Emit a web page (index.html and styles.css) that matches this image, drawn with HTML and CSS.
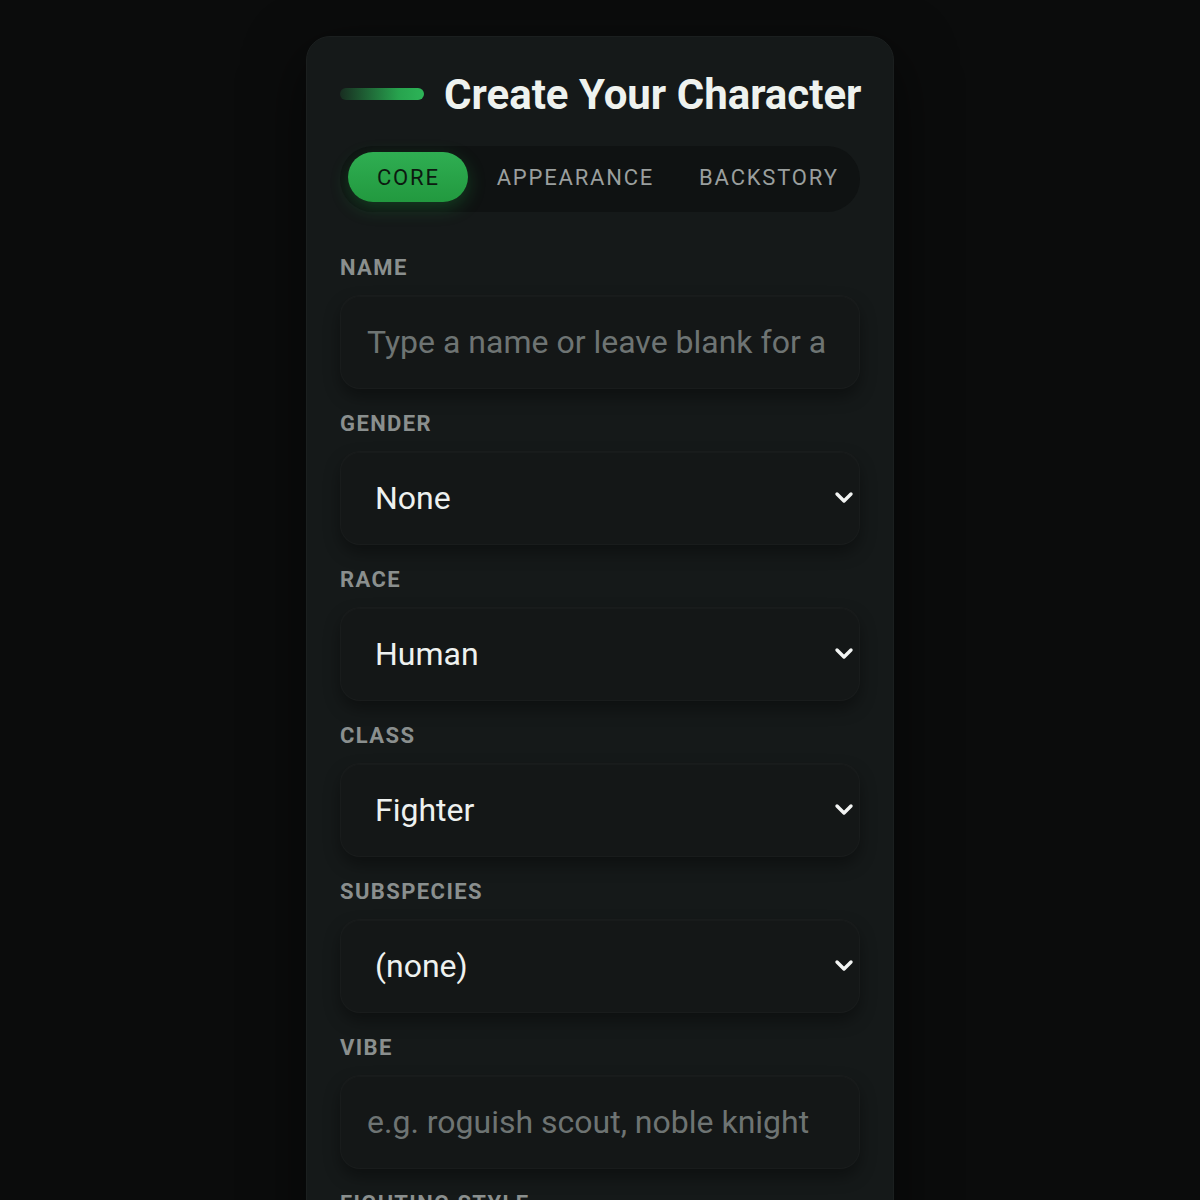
FILE: index.html
```html
<!DOCTYPE html>
<html lang="en">
<head>
<meta charset="utf-8">
<title>Create Your Character</title>
<link rel="stylesheet" href="styles.css">
</head>
<body>
<main class="card">
  <header class="card-head">
    <span class="accent-bar"></span>
    <h1 class="title">Create Your Character</h1>
  </header>

  <nav class="tabs">
    <button class="tab tab-active">CORE</button>
    <button class="tab">APPEARANCE</button>
    <button class="tab">BACKSTORY</button>
  </nav>

  <form class="form">
    <div class="field">
      <label class="label" for="name">NAME</label>
      <input class="control input" id="name" type="text" placeholder="Type a name or leave blank for a random one">
    </div>

    <div class="field">
      <label class="label" for="gender">GENDER</label>
      <div class="select-wrap">
        <select class="control select" id="gender"><option>None</option><option>Male</option><option>Female</option></select>
        <svg class="chev" viewBox="0 0 20 14" width="20" height="14"><path d="M3 3 L10 10 L17 3" fill="none" stroke="#f2f4f3" stroke-width="3.4" stroke-linecap="round" stroke-linejoin="round"/></svg>
      </div>
    </div>

    <div class="field">
      <label class="label" for="race">RACE</label>
      <div class="select-wrap">
        <select class="control select" id="race"><option>Human</option><option>Elf</option><option>Dwarf</option></select>
        <svg class="chev" viewBox="0 0 20 14" width="20" height="14"><path d="M3 3 L10 10 L17 3" fill="none" stroke="#f2f4f3" stroke-width="3.4" stroke-linecap="round" stroke-linejoin="round"/></svg>
      </div>
    </div>

    <div class="field">
      <label class="label" for="class">CLASS</label>
      <div class="select-wrap">
        <select class="control select" id="class"><option>Fighter</option><option>Wizard</option><option>Rogue</option></select>
        <svg class="chev" viewBox="0 0 20 14" width="20" height="14"><path d="M3 3 L10 10 L17 3" fill="none" stroke="#f2f4f3" stroke-width="3.4" stroke-linecap="round" stroke-linejoin="round"/></svg>
      </div>
    </div>

    <div class="field">
      <label class="label" for="sub">SUBSPECIES</label>
      <div class="select-wrap">
        <select class="control select" id="sub"><option>(none)</option></select>
        <svg class="chev" viewBox="0 0 20 14" width="20" height="14"><path d="M3 3 L10 10 L17 3" fill="none" stroke="#f2f4f3" stroke-width="3.4" stroke-linecap="round" stroke-linejoin="round"/></svg>
      </div>
    </div>

    <div class="field">
      <label class="label" for="vibe">VIBE</label>
      <input class="control input" id="vibe" type="text" placeholder="e.g. roguish scout, noble knight">
    </div>

    <div class="field">
      <label class="label" for="style">FIGHTING STYLE</label>
      <div class="select-wrap">
        <select class="control select" id="style"><option>Defense</option></select>
        <svg class="chev" viewBox="0 0 20 14" width="20" height="14"><path d="M3 3 L10 10 L17 3" fill="none" stroke="#f2f4f3" stroke-width="3.4" stroke-linecap="round" stroke-linejoin="round"/></svg>
      </div>
    </div>
  </form>
</main>
</body>
</html>
```

FILE: styles.css
```css
* { box-sizing: border-box; }

html, body {
  margin: 0;
  padding: 0;
  background: #0b0c0c;
  font-family: Roboto, "Liberation Sans", sans-serif;
}

body {
  height: 1200px;
  overflow: hidden;
}

.card {
  width: 588px;
  margin: 36px auto 0;
  padding: 33px 33px 40px;
  background: #151919;
  border: 1px solid #1b1f1f;
  border-radius: 24px;
  box-shadow: 0 20px 60px rgba(0, 0, 0, 0.6);
}

.card-head {
  display: flex;
  align-items: center;
  gap: 20px;
}

.accent-bar {
  flex: none;
  width: 84px;
  height: 12px;
  margin-top: -2px;
  border-radius: 6px;
  background: linear-gradient(90deg, rgba(40, 160, 75, 0.15) 0%, #27a34e 70%, #2db457 100%);
}

.title {
  margin: 0;
  font-size: 42px;
  line-height: 50px;
  font-weight: 700;
  color: #eef2ef;
  white-space: nowrap;
}

.tabs {
  display: flex;
  margin-top: 26px;
  padding: 6px 8px;
  height: 66px;
  background: #0f1212;
  border-radius: 33px;
}

.tab {
  flex: none;
  height: 50px;
  padding: 0 16px 0 29px;
  border: 0;
  border-radius: 25px;
  background: transparent;
  font-family: inherit;
  font-size: 22px;
  font-weight: 400;
  letter-spacing: 1.8px;
  color: #9a9f9e;
}

.tab-active {
  padding: 0 28px 0 29px;
  background: linear-gradient(180deg, #2fae52 0%, #22993f 100%);
  color: #0c1a10;
  box-shadow: 0 6px 18px rgba(34, 160, 70, 0.3);
}

.form {
  display: flex;
  flex-direction: column;
  gap: 22px;
  margin-top: 43px;
}

.field {
  display: flex;
  flex-direction: column;
  gap: 14px;
}

.label {
  font-size: 22px;
  line-height: 26px;
  font-weight: 700;
  letter-spacing: 1.4px;
  color: #8a8f8e;
}

.control {
  width: 100%;
  height: 94px;
  border: 1px solid rgba(255, 255, 255, 0.025);
  border-radius: 20px;
  background: #141717;
  font-family: inherit;
  font-size: 32px;
  color: #eef1ef;
  outline: none;
  box-shadow: 0 8px 16px rgba(0, 0, 0, 0.35), inset 0 1px 0 rgba(255, 255, 255, 0.02);
}

.input {
  padding: 0 27px 0 26px;
}

.input::placeholder {
  color: #6e7473;
}

.select-wrap {
  position: relative;
}

.select {
  appearance: none;
  -webkit-appearance: none;
  padding: 0 60px 0 34px;
}

.chev {
  position: absolute;
  right: 6px;
  top: 50%;
  margin-top: -7px;
  pointer-events: none;
}
```
